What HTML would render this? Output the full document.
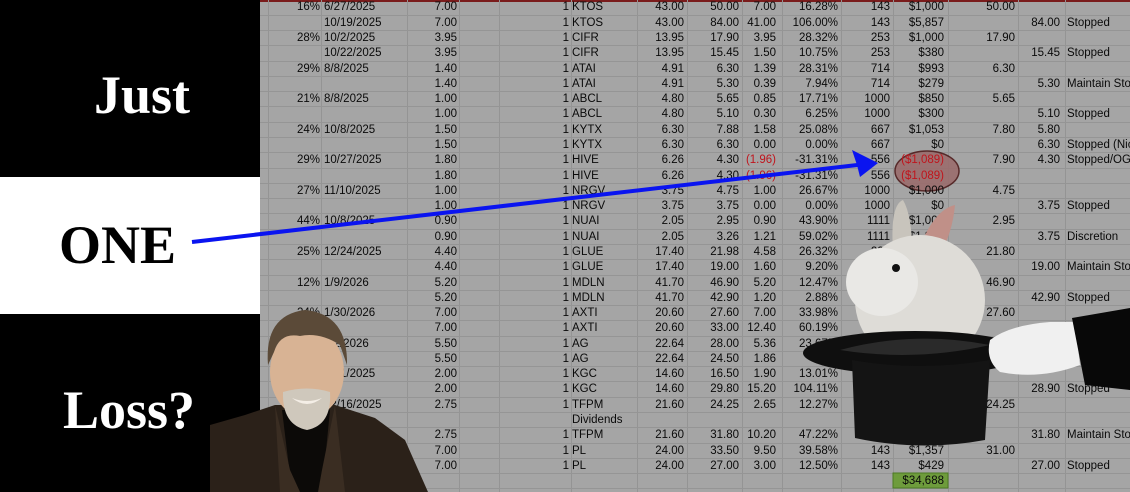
<!DOCTYPE html>
<html><head><meta charset="utf-8"><style>
*{margin:0;padding:0;box-sizing:border-box}
body{width:1130px;height:492px;overflow:hidden;position:relative;background:#a4a4a4;font-family:"Liberation Sans",sans-serif}
#grid{position:absolute;left:260px;top:0;width:870px;height:492px;background:#a5a5a5}
.vl{position:absolute;top:0;width:1px;height:492px;background:#949494}
.hl{position:absolute;left:260px;width:870px;height:1px;background:#959595}
.r{position:absolute;left:0;width:1130px;height:15.28px;font-size:11.5px;line-height:15.28px;color:#0a0a0a;white-space:nowrap;margin-top:1px}
.r span{position:absolute;top:0}
.p{right:810px}.d{left:324px}.v{right:673px}.o{right:561px}.t{left:572px}.pr{right:446px}
.e{right:391px}.f{right:354px}.g{right:292px}.h{right:240px}.i{right:186px}.j{right:115px}.k{right:70px}.l{left:1067px}
.red{color:#c0141c}
#left{position:absolute;left:0;top:0;width:260px;height:492px;background:#000}
#white{position:absolute;left:0;top:177px;width:260px;height:137px;background:#fff}
.big{position:absolute;font-family:"Liberation Serif",serif;font-weight:bold;font-size:54px;line-height:1}
</style></head><body>
<div id="grid"></div>
<div style="position:absolute;left:260px;top:0;width:870px;height:2px;background:#7a1c1c"></div>
<div class="vl" style="left:268px"></div><div class="vl" style="left:321px"></div><div class="vl" style="left:407px"></div><div class="vl" style="left:459px"></div><div class="vl" style="left:499px"></div><div class="vl" style="left:571px"></div><div class="vl" style="left:637px"></div><div class="vl" style="left:687px"></div><div class="vl" style="left:742px"></div><div class="vl" style="left:782px"></div><div class="vl" style="left:841px"></div><div class="vl" style="left:893px"></div><div class="vl" style="left:948px"></div><div class="vl" style="left:1018px"></div><div class="vl" style="left:1065px"></div>
<div class="hl" style="top:14.7px"></div><div class="hl" style="top:30px"></div><div class="hl" style="top:45.2px"></div><div class="hl" style="top:60.5px"></div><div class="hl" style="top:75.8px"></div><div class="hl" style="top:91px"></div><div class="hl" style="top:106.3px"></div><div class="hl" style="top:121.6px"></div><div class="hl" style="top:136.9px"></div><div class="hl" style="top:152.2px"></div><div class="hl" style="top:167.5px"></div><div class="hl" style="top:182.8px"></div><div class="hl" style="top:198px"></div><div class="hl" style="top:213.3px"></div><div class="hl" style="top:228.6px"></div><div class="hl" style="top:243.9px"></div><div class="hl" style="top:259.2px"></div><div class="hl" style="top:274.5px"></div><div class="hl" style="top:289.7px"></div><div class="hl" style="top:305px"></div><div class="hl" style="top:320.3px"></div><div class="hl" style="top:335.6px"></div><div class="hl" style="top:350.9px"></div><div class="hl" style="top:366.2px"></div><div class="hl" style="top:381.4px"></div><div class="hl" style="top:396.7px"></div><div class="hl" style="top:412px"></div><div class="hl" style="top:427.3px"></div><div class="hl" style="top:442.6px"></div><div class="hl" style="top:457.9px"></div><div class="hl" style="top:473.1px"></div><div class="hl" style="top:488.4px"></div>

<svg style="position:absolute;left:0;top:0" width="1130" height="492"><ellipse cx="927" cy="171" rx="32" ry="20" fill="#9a6a6a" stroke="#4a1515" stroke-width="1.5" opacity="0.85"/><rect x="893" y="473" width="55" height="15" fill="#6e9c3c" stroke="#4c7a22"/></svg>

<div class="r" style="top:-0.6px"><span class="p">16%</span><span class="d">6/27/2025</span><span class="v">7.00</span><span class="o">1</span><span class="t">KTOS</span><span class="pr">43.00</span><span class="e">50.00</span><span class="f">7.00</span><span class="g">16.28%</span><span class="h">143</span><span class="i">$1,000</span><span class="j">50.00</span></div>
<div class="r" style="top:14.7px"><span class="d">10/19/2025</span><span class="v">7.00</span><span class="o">1</span><span class="t">KTOS</span><span class="pr">43.00</span><span class="e">84.00</span><span class="f">41.00</span><span class="g">106.00%</span><span class="h">143</span><span class="i">$5,857</span><span class="k">84.00</span><span class="l">Stopped</span></div>
<div class="r" style="top:30px"><span class="p">28%</span><span class="d">10/2/2025</span><span class="v">3.95</span><span class="o">1</span><span class="t">CIFR</span><span class="pr">13.95</span><span class="e">17.90</span><span class="f">3.95</span><span class="g">28.32%</span><span class="h">253</span><span class="i">$1,000</span><span class="j">17.90</span></div>
<div class="r" style="top:45.2px"><span class="d">10/22/2025</span><span class="v">3.95</span><span class="o">1</span><span class="t">CIFR</span><span class="pr">13.95</span><span class="e">15.45</span><span class="f">1.50</span><span class="g">10.75%</span><span class="h">253</span><span class="i">$380</span><span class="k">15.45</span><span class="l">Stopped</span></div>
<div class="r" style="top:60.5px"><span class="p">29%</span><span class="d">8/8/2025</span><span class="v">1.40</span><span class="o">1</span><span class="t">ATAI</span><span class="pr">4.91</span><span class="e">6.30</span><span class="f">1.39</span><span class="g">28.31%</span><span class="h">714</span><span class="i">$993</span><span class="j">6.30</span></div>
<div class="r" style="top:75.8px"><span class="v">1.40</span><span class="o">1</span><span class="t">ATAI</span><span class="pr">4.91</span><span class="e">5.30</span><span class="f">0.39</span><span class="g">7.94%</span><span class="h">714</span><span class="i">$279</span><span class="k">5.30</span><span class="l">Maintain Stop</span></div>
<div class="r" style="top:91px"><span class="p">21%</span><span class="d">8/8/2025</span><span class="v">1.00</span><span class="o">1</span><span class="t">ABCL</span><span class="pr">4.80</span><span class="e">5.65</span><span class="f">0.85</span><span class="g">17.71%</span><span class="h">1000</span><span class="i">$850</span><span class="j">5.65</span></div>
<div class="r" style="top:106.3px"><span class="v">1.00</span><span class="o">1</span><span class="t">ABCL</span><span class="pr">4.80</span><span class="e">5.10</span><span class="f">0.30</span><span class="g">6.25%</span><span class="h">1000</span><span class="i">$300</span><span class="k">5.10</span><span class="l">Stopped</span></div>
<div class="r" style="top:121.6px"><span class="p">24%</span><span class="d">10/8/2025</span><span class="v">1.50</span><span class="o">1</span><span class="t">KYTX</span><span class="pr">6.30</span><span class="e">7.88</span><span class="f">1.58</span><span class="g">25.08%</span><span class="h">667</span><span class="i">$1,053</span><span class="j">7.80</span><span class="k">5.80</span></div>
<div class="r" style="top:136.9px"><span class="v">1.50</span><span class="o">1</span><span class="t">KYTX</span><span class="pr">6.30</span><span class="e">6.30</span><span class="f">0.00</span><span class="g">0.00%</span><span class="h">667</span><span class="i">$0</span><span class="k">6.30</span><span class="l">Stopped (Nick</span></div>
<div class="r" style="top:152.2px"><span class="p">29%</span><span class="d">10/27/2025</span><span class="v">1.80</span><span class="o">1</span><span class="t">HIVE</span><span class="pr">6.26</span><span class="e">4.30</span><span class="f red">(1.96)</span><span class="g">-31.31%</span><span class="h">556</span><span class="i red">($1,089)</span><span class="j">7.90</span><span class="k">4.30</span><span class="l">Stopped/OGR</span></div>
<div class="r" style="top:167.5px"><span class="v">1.80</span><span class="o">1</span><span class="t">HIVE</span><span class="pr">6.26</span><span class="e">4.30</span><span class="f red">(1.96)</span><span class="g">-31.31%</span><span class="h">556</span><span class="i red">($1,089)</span></div>
<div class="r" style="top:182.8px"><span class="p">27%</span><span class="d">11/10/2025</span><span class="v">1.00</span><span class="o">1</span><span class="t">NRGV</span><span class="pr">3.75</span><span class="e">4.75</span><span class="f">1.00</span><span class="g">26.67%</span><span class="h">1000</span><span class="i">$1,000</span><span class="j">4.75</span></div>
<div class="r" style="top:198px"><span class="v">1.00</span><span class="o">1</span><span class="t">NRGV</span><span class="pr">3.75</span><span class="e">3.75</span><span class="f">0.00</span><span class="g">0.00%</span><span class="h">1000</span><span class="i">$0</span><span class="k">3.75</span><span class="l">Stopped</span></div>
<div class="r" style="top:213.3px"><span class="p">44%</span><span class="d">10/8/2025</span><span class="v">0.90</span><span class="o">1</span><span class="t">NUAI</span><span class="pr">2.05</span><span class="e">2.95</span><span class="f">0.90</span><span class="g">43.90%</span><span class="h">1111</span><span class="i">$1,000</span><span class="j">2.95</span></div>
<div class="r" style="top:228.6px"><span class="v">0.90</span><span class="o">1</span><span class="t">NUAI</span><span class="pr">2.05</span><span class="e">3.26</span><span class="f">1.21</span><span class="g">59.02%</span><span class="h">1111</span><span class="i">$1,344</span><span class="k">3.75</span><span class="l">Discretion</span></div>
<div class="r" style="top:243.9px"><span class="p">25%</span><span class="d">12/24/2025</span><span class="v">4.40</span><span class="o">1</span><span class="t">GLUE</span><span class="pr">17.40</span><span class="e">21.98</span><span class="f">4.58</span><span class="g">26.32%</span><span class="h">227</span><span class="i">$1,041</span><span class="j">21.80</span></div>
<div class="r" style="top:259.2px"><span class="v">4.40</span><span class="o">1</span><span class="t">GLUE</span><span class="pr">17.40</span><span class="e">19.00</span><span class="f">1.60</span><span class="g">9.20%</span><span class="h">227</span><span class="i">$364</span><span class="k">19.00</span><span class="l">Maintain Stop</span></div>
<div class="r" style="top:274.5px"><span class="p">12%</span><span class="d">1/9/2026</span><span class="v">5.20</span><span class="o">1</span><span class="t">MDLN</span><span class="pr">41.70</span><span class="e">46.90</span><span class="f">5.20</span><span class="g">12.47%</span><span class="j">46.90</span></div>
<div class="r" style="top:289.7px"><span class="v">5.20</span><span class="o">1</span><span class="t">MDLN</span><span class="pr">41.70</span><span class="e">42.90</span><span class="f">1.20</span><span class="g">2.88%</span><span class="k">42.90</span><span class="l">Stopped</span></div>
<div class="r" style="top:305px"><span class="p">24%</span><span class="d">1/30/2026</span><span class="v">7.00</span><span class="o">1</span><span class="t">AXTI</span><span class="pr">20.60</span><span class="e">27.60</span><span class="f">7.00</span><span class="g">33.98%</span><span class="j">27.60</span></div>
<div class="r" style="top:320.3px"><span class="v">7.00</span><span class="o">1</span><span class="t">AXTI</span><span class="pr">20.60</span><span class="e">33.00</span><span class="f">12.40</span><span class="g">60.19%</span></div>
<div class="r" style="top:335.6px"><span class="d">2/2/2026</span><span class="v">5.50</span><span class="o">1</span><span class="t">AG</span><span class="pr">22.64</span><span class="e">28.00</span><span class="f">5.36</span><span class="g">23.67%</span></div>
<div class="r" style="top:350.9px"><span class="v">5.50</span><span class="o">1</span><span class="t">AG</span><span class="pr">22.64</span><span class="e">24.50</span><span class="f">1.86</span></div>
<div class="r" style="top:366.2px"><span class="d">12/1/2025</span><span class="v">2.00</span><span class="o">1</span><span class="t">KGC</span><span class="pr">14.60</span><span class="e">16.50</span><span class="f">1.90</span><span class="g">13.01%</span></div>
<div class="r" style="top:381.4px"><span class="v">2.00</span><span class="o">1</span><span class="t">KGC</span><span class="pr">14.60</span><span class="e">29.80</span><span class="f">15.20</span><span class="g">104.11%</span><span class="k">28.90</span><span class="l">Stopped</span></div>
<div class="r" style="top:396.7px"><span class="d">12/16/2025</span><span class="v">2.75</span><span class="o">1</span><span class="t">TFPM</span><span class="pr">21.60</span><span class="e">24.25</span><span class="f">2.65</span><span class="g">12.27%</span><span class="j">24.25</span></div>
<div class="r" style="top:412px"><span class="t">Dividends</span></div>
<div class="r" style="top:427.3px"><span class="v">2.75</span><span class="o">1</span><span class="t">TFPM</span><span class="pr">21.60</span><span class="e">31.80</span><span class="f">10.20</span><span class="g">47.22%</span><span class="k">31.80</span><span class="l">Maintain Stop</span></div>
<div class="r" style="top:442.6px"><span class="v">7.00</span><span class="o">1</span><span class="t">PL</span><span class="pr">24.00</span><span class="e">33.50</span><span class="f">9.50</span><span class="g">39.58%</span><span class="h">143</span><span class="i">$1,357</span><span class="j">31.00</span></div>
<div class="r" style="top:457.9px"><span class="v">7.00</span><span class="o">1</span><span class="t">PL</span><span class="pr">24.00</span><span class="e">27.00</span><span class="f">3.00</span><span class="g">12.50%</span><span class="h">143</span><span class="i">$429</span><span class="k">27.00</span><span class="l">Stopped</span></div>
<div class="r" style="top:473.1px"><span class="i">$34,688</span></div>

<div id="left"></div><div id="white"></div>
<div class="big" style="left:94px;top:68px;color:#fff">Just</div>
<div class="big" style="left:59px;top:218px;color:#000">ONE</div>
<div class="big" style="left:63px;top:383px;color:#fff">Loss?</div>

<svg style="position:absolute;left:0;top:0" width="1130" height="492">
<line x1="192" y1="242" x2="866" y2="164" stroke="#0a14f0" stroke-width="4"/>
<polygon points="878,163 852,150 857,165 860,177" fill="#0a14f0"/>
<!-- person -->
<path d="M210,425 L245,415 L275,405 L335,405 L375,418 L405,440 L428,492 L210,492 Z" fill="#2b2119"/>
<path d="M282,410 L330,410 L322,492 L292,492 Z" fill="#0c0a08"/>
<path d="M275,405 L290,470 L300,492 L280,492 Z" fill="#3a2d22"/>
<path d="M335,405 L322,470 L318,492 L345,492 Z" fill="#3a2d22"/>
<ellipse cx="307" cy="372" rx="37" ry="46" fill="#d8b394"/>
<path d="M268,365 Q264,315 305,310 Q348,314 347,365 L340,345 Q320,332 300,336 Q280,332 274,352 Z" fill="#5b4a38"/>
<path d="M283,392 Q307,385 330,392 Q332,425 307,430 Q282,425 283,392 Z" fill="#cfc8bc"/>
<path d="M292,398 Q307,404 322,398 Q307,410 292,398 Z" fill="#f4eee6"/>
<!-- rabbit & hat -->
<path d="M893,250 Q890,205 903,200 Q912,215 912,252 Z" fill="#c8c4bc"/>
<path d="M918,252 Q933,210 955,205 Q952,238 935,262 Z" fill="#c09088"/>
<ellipse cx="920" cy="300" rx="65" ry="65" fill="#dedcd7"/>
<ellipse cx="882" cy="282" rx="36" ry="34" fill="#e9e8e5"/>
<circle cx="896" cy="268" r="4" fill="#111"/>
<ellipse cx="915" cy="353" rx="112" ry="22" fill="#0f0f0f"/>
<path d="M852,360 L855,438 Q920,452 985,440 L990,360 Q920,372 852,360 Z" fill="#141414"/>
<path d="M840,350 Q915,330 990,345 Q915,362 840,350 Z" fill="#2a2a2a"/>
<path d="M990,340 Q1010,325 1050,322 L1075,322 L1080,365 Q1040,380 1000,372 Q985,360 990,340 Z" fill="#f0f0f0"/>
<path d="M1072,318 L1130,308 L1130,390 L1085,385 Z" fill="#080808"/>
</svg>
</body></html>
